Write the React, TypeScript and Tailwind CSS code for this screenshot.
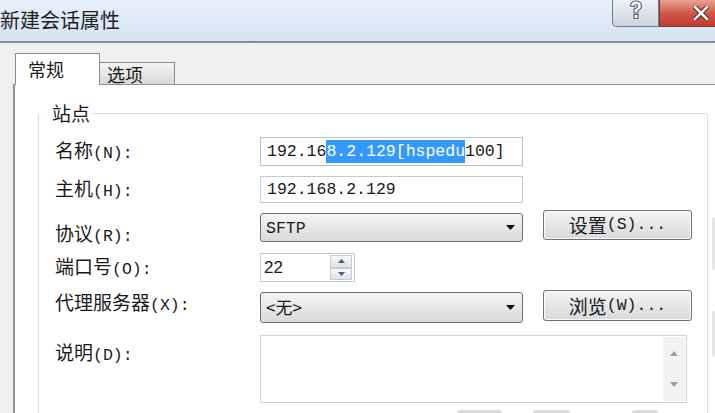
const cjk = "font-['Noto_Sans_CJK_SC',sans-serif]";
const mono = "font-['Liberation_Mono','Noto_Sans_CJK_SC',monospace]";

function Label({ cn, en }: { cn: string; en: string }) {
  return (
    <div className="w-[205px] shrink-0 whitespace-nowrap leading-[20px] text-[#1a1a1a]">
      <span className={`${cjk} text-[19px]`}>{cn}</span>
      <span className={`${mono} text-[16.5px]`}>{en}</span>
    </div>
  );
}

function Arrow() {
  return (
    <svg width="9" height="5" viewBox="0 0 9 5" className="shrink-0">
      <path d="M0 0h9L4.5 5z" fill="#111" />
    </svg>
  );
}

function Combo({ children }: { children: React.ReactNode }) {
  return (
    <div className="w-[263px] h-full rounded-[3px] border border-[#707070] bg-gradient-to-b from-[#f5f5f5] to-[#dadada] flex items-center pl-[5px] pr-[7px]">
      <span className="flex-1 leading-[20px]">{children}</span>
      <Arrow />
    </div>
  );
}

function Button({ cn, en }: { cn: string; en: string }) {
  return (
    <div className="ml-[20px] w-[149px] h-full rounded-[3px] border border-[#707070] bg-gradient-to-b from-[#f4f4f4] to-[#d9d9d9] flex items-center justify-center shadow-[inset_0_0_0_1px_#fbfbfb]">
      <span className={`${cjk} text-[19px] leading-[20px]`}>{cn}</span>
      <span className={`${mono} text-[16.5px] leading-[20px]`}>{en}</span>
    </div>
  );
}

function SpinBtn({ up }: { up?: boolean }) {
  return (
    <div className="flex-1 border border-[#c8ccd2] bg-gradient-to-b from-[#f7f8f9] to-[#dfe3e8] flex items-center justify-center">
      <svg width="7" height="4" viewBox="0 0 7 4">
        <path d={up ? "M0 4h7L3.5 0z" : "M0 0h7L3.5 4z"} fill="#4f5e72" />
      </svg>
    </div>
  );
}

export default function App() {
  return (
    <div className="w-[715px] h-[413px] overflow-hidden bg-[#f0f0f0] flex flex-col text-[#1a1a1a]">
      {/* title bar */}
      <div className="h-[41px] shrink-0 flex justify-between bg-gradient-to-b from-[#e6f0fa] to-[#d5e3f2]">
        <div className={`${cjk} mt-[7px] text-[20px] leading-[26px] text-[#1e1e1e]`}>新建会话属性</div>
        <div className="flex items-start">
          <div className="w-[47px] h-[27px] rounded-bl-[5px] border border-t-0 border-[#6f7b89] bg-gradient-to-b from-[#eef1f5] to-[#cdd5df] flex items-start justify-center">
            <svg width="14" height="20" viewBox="0 0 14 20">
              <path
                d="M1.5 6 Q1.5 1 7 1 Q12.5 1 12.5 6 Q12.5 9 9 10.5 L9 13 L5 13 L5 9 Q8.5 8 8.5 6 Q8.5 4.5 7 4.5 Q5.5 4.5 5.5 6.5 Z M5 14.5 H9 V18.5 H5 Z"
                fill="#f4f6f8"
                stroke="#5a6573"
                strokeWidth="1.2"
              />
            </svg>
          </div>
          <div className="w-[56px] h-[27px] border border-t-0 border-r-0 border-[#7c3b33] bg-gradient-to-b from-[#e8a396] via-[#d0584a] to-[#c23a2c] flex items-center pl-[33px]">
            <svg width="16" height="14" viewBox="0 0 16 14">
              <path d="M2 1 L14 13 M14 1 L2 13" stroke="#4a1a14" strokeWidth="4.5" strokeLinecap="square" />
              <path d="M2 1 L14 13 M14 1 L2 13" stroke="#fff" strokeWidth="2.6" strokeLinecap="square" />
            </svg>
          </div>
        </div>
      </div>
      <div className="h-[2px] shrink-0 bg-[#848d98]" />

      {/* tab strip */}
      <div className="h-[41px] shrink-0 flex items-end pl-[15px]">
        <div className="relative z-10 -mb-px w-[85px] h-[32px] bg-white border border-b-0 border-[#898c95] pl-[12px] pt-[4px]">
          <span className={`${cjk} text-[18px] leading-[22px]`}>常规</span>
        </div>
        <div className="w-[75px] h-[22px] border border-l-0 border-b-0 border-[#898c95] bg-gradient-to-b from-[#f4f4f4] to-[#d9d9d9] pl-[7px]">
          <span className={`${cjk} text-[18px] leading-[22px]`}>选项</span>
        </div>
      </div>

      {/* tab panel */}
      <div className="flex-1 ml-[13px] bg-white border-l-2 border-t border-[#8f939a] flex items-start">
        <fieldset className="ml-[23px] mt-[18px] w-[670px] shrink-0 rounded-[3px] border border-[#d5dfe5] pl-[16px] pt-[14px]">
          <legend className={`${cjk} ml-[-14px] pl-[11px] pr-[2px] text-[19px] leading-[20px]`}>站点</legend>

          <div className="flex flex-col">
            <div className="h-[29px] flex items-center">
              <Label cn="名称" en="(N):" />
              <div className={`${mono} w-[263px] h-full border border-[#b7bfca] flex items-center pl-[6px] text-[16.5px] leading-[20px] whitespace-pre`}>
                <span>192.16</span>
                <span className="bg-[#3399ff] text-white leading-[23px]">8.2.129[hspedu</span>
                <span>100]</span>
              </div>
            </div>

            <div className="mt-[10px] h-[27px] flex items-center">
              <Label cn="主机" en="(H):" />
              <div className={`${mono} w-[263px] h-full border border-[#c3cad3] flex items-center pl-[6px] text-[16.5px] leading-[20px]`}>
                192.168.2.129
              </div>
            </div>

            <div className="mt-[7px] h-[32px] flex items-start">
              <div className="pt-[13px]">
                <Label cn="协议" en="(R):" />
              </div>
              <div className="mt-[3px] h-[29px]">
                <Combo>
                  <span className={`${mono} text-[16.5px]`}>SFTP</span>
                </Combo>
              </div>
              <div className="h-[30px]">
                <Button cn="设置" en="(S)..." />
              </div>
            </div>

            <div className="mt-[11px] h-[29px] flex items-center">
              <Label cn="端口号" en="(O):" />
              <div className="w-[95px] h-full border border-[#c3cad3] flex items-center pl-[3px] pr-[2px]">
                <span className="flex-1 font-['Liberation_Sans',sans-serif] text-[17px] leading-[20px]">22</span>
                <div className="w-[22px] h-[25px] flex flex-col">
                  <SpinBtn up />
                  <SpinBtn />
                </div>
              </div>
            </div>

            <div className="mt-[8px] h-[33px] flex items-start">
              <div className="pt-[2px]">
                <Label cn="代理服务器" en="(X):" />
              </div>
              <div className="mt-[2px] h-[31px]">
                <Combo>
                  <span className={`${cjk} text-[17px]`}>&lt;无&gt;</span>
                </Combo>
              </div>
              <div className="h-[31px]">
                <Button cn="浏览" en="(W)..." />
              </div>
            </div>

            <div className="mt-[12px] flex items-start">
              <div className="pt-[7px]">
                <Label cn="说明" en="(D):" />
              </div>
              <div className="w-[427px] h-[68px] border border-[#cdd3da] flex justify-end p-px">
                <div className="w-[22px] h-full bg-[#f2f2f2] flex flex-col items-center justify-between pt-[14px] pb-[14px]">
                  <svg width="8" height="5" viewBox="0 0 8 5">
                    <path d="M0 5h8L4 0z" fill="#a0a0a0" />
                  </svg>
                  <svg width="8" height="5" viewBox="0 0 8 5">
                    <path d="M0 0h8L4 5z" fill="#a0a0a0" />
                  </svg>
                </div>
              </div>
            </div>

            <div className="mt-[7px] h-[20px] flex pl-[402px]">
              <div className="w-[45px] h-full rounded-t-[3px] bg-[#dcdcdc]" />
              <div className="ml-[31px] w-[37px] h-full rounded-t-[3px] bg-[#dcdcdc]" />
              <div className="ml-[62px] w-[26px] h-full rounded-t-[3px] bg-[#dcdcdc]" />
            </div>
          </div>
        </fieldset>

        <div className="ml-[4px] w-[6px] flex flex-col">
          <div className="mt-[132px] h-[53px] rounded-l-[4px] bg-[#e4e4e4]" />
          <div className="mt-[41px] h-[46px] rounded-l-[4px] bg-[#e4e4e4]" />
        </div>
      </div>
    </div>
  );
}
